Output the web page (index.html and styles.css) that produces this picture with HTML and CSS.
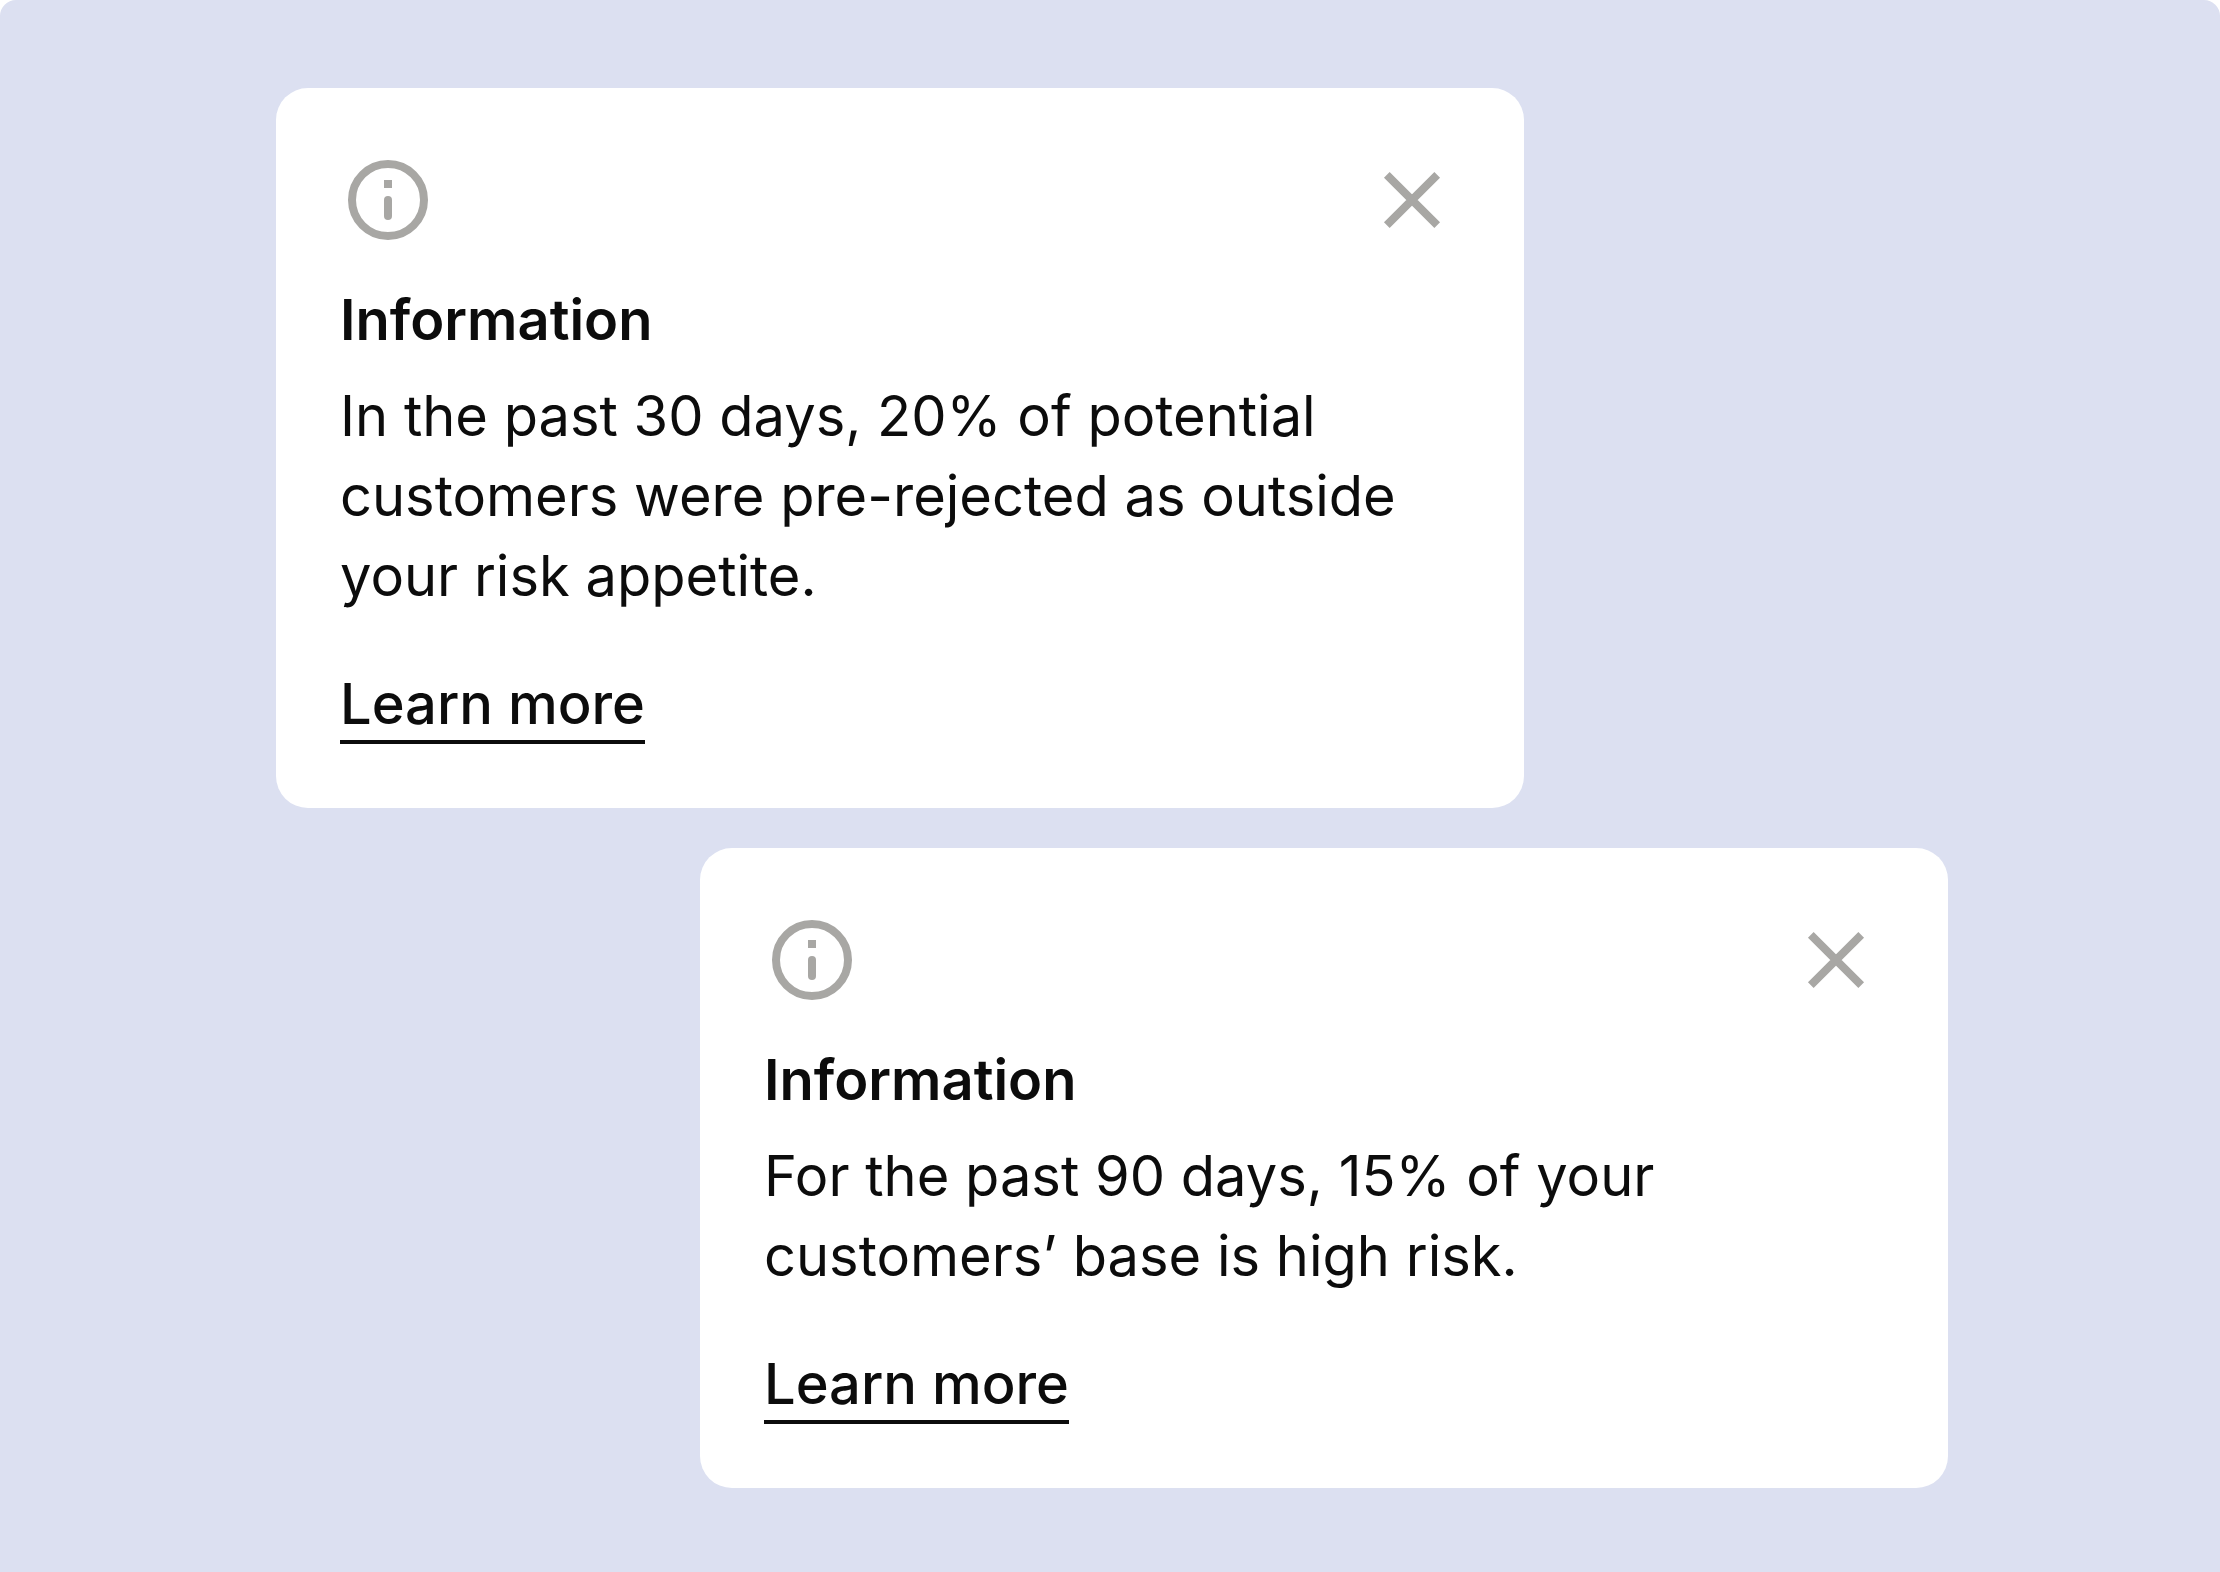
FILE: index.html
```html
<!DOCTYPE html>
<html lang="en">
<head>
<meta charset="utf-8">
<meta name="viewport" content="width=device-width, initial-scale=1">
<title>Information</title>
<link rel="stylesheet" href="styles.css">
</head>
<body>
<main class="stage">
  <div class="stack">
    <article class="card">
      <header class="card-bar">
        <svg class="icon" viewBox="0 0 24 24" fill="none" aria-hidden="true">
          <circle cx="12" cy="12" r="9" stroke="currentColor" stroke-width="2"/>
          <path d="M11 7h2v2h-2z" fill="currentColor"/>
          <path d="M12 12v4" stroke="currentColor" stroke-width="2" stroke-linecap="round"/>
        </svg>
        <button class="close" type="button" aria-label="Close">
          <svg class="icon" viewBox="0 0 24 24" fill="none" aria-hidden="true">
            <path d="M5.7 5.7l12.6 12.6M18.3 5.7L5.7 18.3" stroke="currentColor" stroke-width="2"/>
          </svg>
        </button>
      </header>
      <h2 class="title">Information</h2>
      <p class="text">In the past 30 days, 20% of potential customers were pre-rejected as outside your risk appetite.</p>
      <a class="link" href="#">Learn more</a>
    </article>
    <article class="card card-end">
      <header class="card-bar">
        <svg class="icon" viewBox="0 0 24 24" fill="none" aria-hidden="true">
          <circle cx="12" cy="12" r="9" stroke="currentColor" stroke-width="2"/>
          <path d="M11 7h2v2h-2z" fill="currentColor"/>
          <path d="M12 12v4" stroke="currentColor" stroke-width="2" stroke-linecap="round"/>
        </svg>
        <button class="close" type="button" aria-label="Close">
          <svg class="icon" viewBox="0 0 24 24" fill="none" aria-hidden="true">
            <path d="M5.7 5.7l12.6 12.6M18.3 5.7L5.7 18.3" stroke="currentColor" stroke-width="2"/>
          </svg>
        </button>
      </header>
      <h2 class="title">Information</h2>
      <p class="text">For the past 90 days, 15% of your customers’ base is high risk.</p>
      <a class="link" href="#">Learn more</a>
    </article>
  </div>
</main>
</body>
</html>
```
FILE: styles.css
```css
* {
  box-sizing: border-box;
}

body {
  margin: 0;
  background: #fff;
  color: #0c0c0c;
  font-family: Inter, "Liberation Sans", sans-serif;
  font-size: 56px;
  line-height: 80px;
}

.stage {
  min-height: 100vh;
  padding: 88px 40px 84px 44px;
  border-radius: 16px 16px 0 0;
  background: #dce0f1;
}

.stack {
  display: flex;
  flex-direction: column;
  gap: 40px;
  max-width: 1672px;
  margin: 0 auto;
}

.card {
  display: flex;
  flex-direction: column;
  align-items: flex-start;
  width: 100%;
  max-width: 1248px;
  padding: 64px;
  border-radius: 32px;
  background: #fff;
}

.card-end {
  align-self: flex-end;
}

.card-bar {
  display: flex;
  align-self: stretch;
  justify-content: space-between;
  margin-bottom: 32px;
  color: #a8a7a4;
}

.icon {
  display: block;
  width: 96px;
  height: 96px;
}

.close {
  padding: 0;
  border: 0;
  background: none;
  color: inherit;
  cursor: pointer;
}

.title {
  margin: 0 0 16px;
  font-size: 56px;
  font-weight: 600;
}

.text {
  margin: 0 0 48px;
}

.link {
  box-shadow: inset 0 -4px #0c0c0c;
  color: inherit;
  font-weight: 500;
  text-decoration: none;
}
```
